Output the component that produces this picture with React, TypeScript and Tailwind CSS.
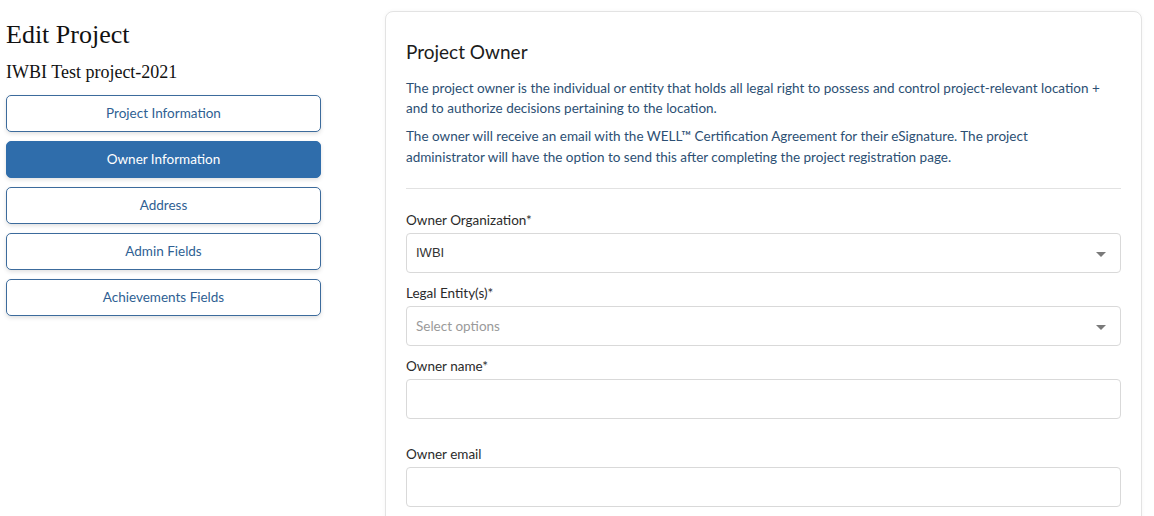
import React from "react"

const navItems = [
  "Project Information",
  "Owner Information",
  "Address",
  "Admin Fields",
  "Achievements Fields",
]

function Caret() {
  return (
    <svg width="10" height="6" viewBox="0 0 10 6" className="mt-[3px] shrink-0">
      <path d="M0 0 L10 0 L5 5 Z" fill="#7a7a7a" />
    </svg>
  )
}

function SelectBox({ value, placeholder }: { value?: string; placeholder?: string }) {
  return (
    <div className="flex h-[40px] items-center justify-between rounded-[4px] border border-[#d9d9d9] bg-white pr-[14px] pl-[9px]">
      {value ? (
        <span className="font-['Liberation_Sans',sans-serif] text-[13px] text-[#333]">{value}</span>
      ) : (
        <span className="text-[13.5px] text-[#9a9a9a]">{placeholder}</span>
      )}
      <Caret />
    </div>
  )
}

function Field({ label, className, children }: { label: string; className?: string; children: React.ReactNode }) {
  return (
    <div className={"flex flex-col " + (className ?? "")}>
      <label className="mb-[3px] text-[13.5px] leading-[20px] text-[#2b2b2b]">{label}</label>
      {children}
    </div>
  )
}

export default function App() {
  return (
    <div className="flex h-[516px] w-[1154px] overflow-hidden bg-white font-['Lato',sans-serif]">
      {/* left column: title + section nav */}
      <div className="ml-[6px] flex w-[315px] shrink-0 flex-col pt-[19px]">
        <h1 className="font-['Liberation_Serif',serif] text-[26px] leading-[32px] text-[#111]">Edit Project</h1>
        <h2 className="mt-[10px] font-['Liberation_Serif',serif] text-[18px] leading-[22px] text-[#111]">
          IWBI Test project-2021
        </h2>
        <div className="mt-[12px] flex flex-col gap-[9px]">
          {navItems.map((item) => {
            const active = item === "Owner Information"
            return (
              <button
                key={item}
                className={
                  active
                    ? "h-[37px] rounded-[5px] border border-[#2f6dab] bg-[#2f6dab] text-[13.5px] text-white shadow-[0_2px_4px_rgba(0,0,0,0.12)]"
                    : "h-[37px] rounded-[5px] border border-[#3c6b9c] bg-white text-[13.5px] text-[#2f5f93] shadow-[0_2px_4px_rgba(0,0,0,0.12)]"
                }
              >
                {item}
              </button>
            )
          })}
        </div>
      </div>

      {/* right column: owner form card */}
      <div className="mt-[11px] ml-[64px] w-[757px] shrink-0 self-start rounded-[8px] border border-[#e3e3e3] bg-white px-[20px] pt-[28px] pb-[20px] shadow-[0_0_4px_rgba(0,0,0,0.04)]">
        <h3 className="text-[19px] leading-[24px] text-[#1c1c1c]">Project Owner</h3>
        <div className="mt-[14px] text-[13.5px] leading-[20px] text-[#2c4f73]">
          <p>
            The project owner is the individual or entity that holds all legal right to possess and control project-relevant location +
            <br />
            and to authorize decisions pertaining to the location.
          </p>
          <p className="mt-[8px] leading-[21px]">
            The owner will receive an email with the WELL™ Certification Agreement for their eSignature. The project
            <br />
            administrator will have the option to send this after completing the project registration page.
          </p>
        </div>
        <div className="mt-[20px] mb-[21px] h-px bg-[#e2e2e2]" />
        <div className="flex flex-col">
          <Field label="Owner Organization*">
            <SelectBox value="IWBI" />
          </Field>
          <Field label="Legal Entity(s)*" className="mt-[10px]">
            <SelectBox placeholder="Select options" />
          </Field>
          <Field label="Owner name*" className="mt-[10px]">
            <div className="h-[40px] rounded-[4px] border border-[#d9d9d9] bg-white" />
          </Field>
          <Field label="Owner email" className="mt-[25px]">
            <div className="h-[40px] rounded-[4px] border border-[#d9d9d9] bg-white" />
          </Field>
        </div>
      </div>
    </div>
  )
}
